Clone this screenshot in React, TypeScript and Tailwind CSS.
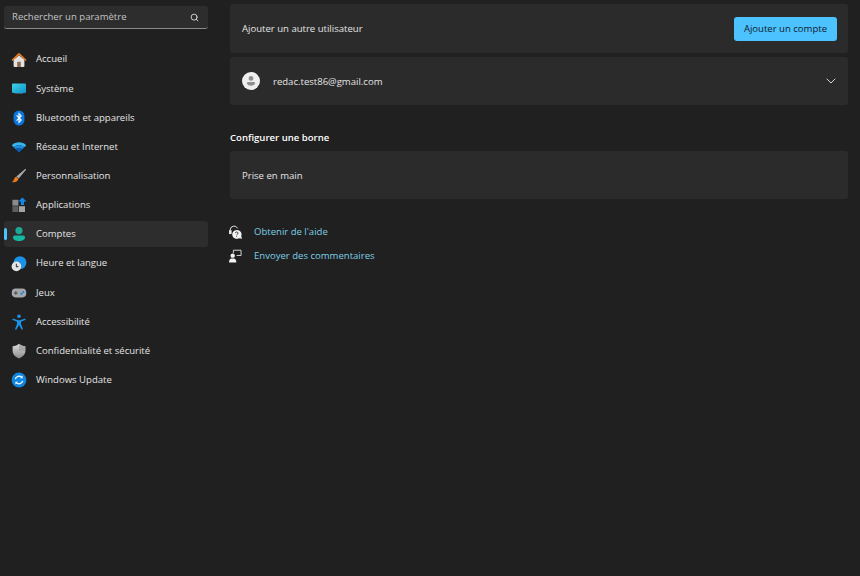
import { ChevronDown, Search } from 'lucide-react'
import type { ReactNode } from 'react'

const Home = () => (
  <svg viewBox="0 0 16 16" className="w-4 h-4">
    <path d="M2.600 7.500 8 3.400l5.400 4.100V14a1 1 0 0 1-1 1H3.600a1 1 0 0 1-1-1z" fill="#e2e2e2" />
    <path d="M6.200 15v-4.600a.6.6 0 0 1 .6-.6h2.400a.6.6 0 0 1 .6.6V15z" fill="#8a6a52" />
    <path d="M.4 8 7.300 1.300a1 1 0 0 1 1.400 0L15.600 8l-1 1.100L8 3.200 1.400 9.100z" fill="#e07b25" />
  </svg>
)

const Monitor = () => (
  <svg viewBox="0 0 16 16" className="w-4 h-4">
    <defs>
      <linearGradient id="sys" x1="0" y1="0" x2="1" y2="1">
        <stop offset="0" stopColor="#3fd0e6" />
        <stop offset="1" stopColor="#1193c9" />
      </linearGradient>
    </defs>
    <rect x="1" y="2.600" width="14" height="9.400" rx="1" fill="url(#sys)" />
    <rect x="4" y="12" width="8" height="1" fill="#3a5a68" />
  </svg>
)

const Bluetooth = () => (
  <svg viewBox="0 0 16 16" className="w-4 h-4">
    <rect x="2.600" y="0.400" width="10.800" height="15.200" rx="5.400" fill="#0a78e0" />
    <path d="M5.600 5.400 10.200 10 8 12.400V3.600L10.200 6 5.600 10.600" fill="none" stroke="#fff" strokeWidth="1.100" />
  </svg>
)

const Wifi = () => (
  <svg viewBox="0 0 16 16" className="w-4 h-4">
    <path d="M.8 6.200C4.800 2.400 11.200 2.400 15.200 6.200l-2 2C10.400 5.600 5.600 5.600 2.800 8.200z" fill="#38b6f0" />
    <path d="M2.800 8.200C5.600 5.600 10.400 5.600 13.200 8.200l-2 2C9.400 8.600 6.600 8.600 4.800 10.200z" fill="#1a8fe0" />
    <path d="M4.800 10.200C6.600 8.600 9.400 8.600 11.200 10.200L8 13.400z" fill="#0c5fb8" />
  </svg>
)

const Brush = () => (
  <svg viewBox="0 0 16 16" className="w-4 h-4">
    <path d="M14.400.8 15.200 1.400 7.800 10.600 5.400 8.400z" fill="#a9a9a9" />
    <path d="M5.200 8.800c-1.800.4-2 2.200-2.600 3.400-.3.700-1 1.400-1.800 1.800 2.800.9 5.800-.2 6.800-3.200z" fill="#e8791f" />
  </svg>
)

const Apps = () => (
  <svg viewBox="0 0 16 16" className="w-4 h-4">
    <rect x="1.400" y="2.800" width="6" height="5.800" fill="#8b8b8b" />
    <rect x="1.400" y="9.200" width="6" height="5.800" fill="#5e5e5e" />
    <rect x="8" y="9.200" width="6" height="5.800" fill="#a3a3a3" />
    <path d="M11.400.6 15.600 4.600H13V8H9.800V4.600H7.200z" fill="#1287e6" />
  </svg>
)

const Account = () => (
  <svg viewBox="0 0 16 16" className="w-4 h-4">
    <circle cx="8" cy="4.600" r="3.600" fill="#1fa795" />
    <path d="M2 11.200A1.800 1.800 0 0 1 3.800 9.400h8.400A1.800 1.800 0 0 1 14 11.200c0 2.600-2.600 3.800-6 3.800s-6-1.200-6-3.800z" fill="#17b8a0" />
  </svg>
)

const Clock = () => (
  <svg viewBox="0 0 16 16" className="w-4 h-4">
    <circle cx="9" cy="6.600" r="6.400" fill="#1a92e6" />
    <circle cx="5.400" cy="10.400" r="4.800" fill="#e4e4e4" />
    <path d="M5.400 7.800v2.800h2" fill="none" stroke="#444" strokeWidth="1.100" />
  </svg>
)

const Gamepad = () => (
  <svg viewBox="0 0 16 16" className="w-4 h-4">
    <rect x="0.800" y="3.400" width="14.400" height="9" rx="3.800" fill="#a4a8ac" />
    <rect x="3" y="7.400" width="3.600" height="1.200" fill="#555" />
    <rect x="4.200" y="6.200" width="1.200" height="3.600" fill="#555" />
    <circle cx="10.400" cy="8.800" r="1.100" fill="#1a84d8" />
    <circle cx="12.200" cy="7" r="1.100" fill="#1a84d8" />
  </svg>
)

const Access = () => (
  <svg viewBox="0 0 16 16" className="w-4 h-4">
    <circle cx="8" cy="2.200" r="1.800" fill="#1a94ea" />
    <path d="M1.800 4.400 7 6.200h2l5.200-1.800.5 1.300L10 7.800V10l2 5.200-1.300.6L8 11l-2.700 4.800-1.300-.6L6 10V7.800L1.300 5.700z" fill="#1a94ea" />
  </svg>
)

const Shield = () => (
  <svg viewBox="0 0 16 16" className="w-4 h-4">
    <defs>
      <linearGradient id="shd" x1="0" y1="0" x2="0" y2="1">
        <stop offset="0" stopColor="#dcdcdc" />
        <stop offset="1" stopColor="#8c8c8c" />
      </linearGradient>
    </defs>
    <path d="M8 .8c1.800 1.500 3.800 2.200 6.400 2.400v4.600c0 3.600-2.400 6-6.400 7.600-4-1.600-6.400-4-6.400-7.600V3.200C4.200 3 6.200 2.300 8 .8z" fill="url(#shd)" />
    <path d="M8 .8c1.800 1.500 3.800 2.200 6.400 2.400v4.600H8z" fill="#8f8f8f" opacity="0.55" />
  </svg>
)

const Update = () => (
  <svg viewBox="0 0 16 16" className="w-4 h-4">
    <circle cx="8" cy="8" r="7.400" fill="#0f86e0" />
    <path d="M4.300 7.200A3.800 3.800 0 0 1 10.800 5.400M11.700 8.800A3.800 3.800 0 0 1 5.200 10.600" fill="none" stroke="#fff" strokeWidth="1.200" />
    <path d="M11.600 3.600v2.600H9zM4.400 12.400V9.800H7z" fill="#fff" />
  </svg>
)

const navItems: { label: string; icon: ReactNode; active?: boolean }[] = [
  { label: 'Accueil', icon: <Home /> },
  { label: 'Système', icon: <Monitor /> },
  { label: 'Bluetooth et appareils', icon: <Bluetooth /> },
  { label: 'Réseau et Internet', icon: <Wifi /> },
  { label: 'Personnalisation', icon: <Brush /> },
  { label: 'Applications', icon: <Apps /> },
  { label: 'Comptes', icon: <Account />, active: true },
  { label: 'Heure et langue', icon: <Clock /> },
  { label: 'Jeux', icon: <Gamepad /> },
  { label: 'Accessibilité', icon: <Access /> },
  { label: 'Confidentialité et sécurité', icon: <Shield /> },
  { label: 'Windows Update', icon: <Update /> },
]

function Card({ children }: { children: ReactNode }) {
  return (
    <div className="h-[48.500px] flex items-center justify-between pl-3 pr-[11px] bg-[#2b2b2b] rounded-[3px]">
      {children}
    </div>
  )
}

export default function App() {
  return (
    <div className="w-[860px] h-[576px] flex bg-[#202020] text-[#e4e4e4] text-[9.550px] font-['Open_Sans','Noto_Sans',sans-serif] overflow-hidden">
      {/* Sidebar */}
      <aside className="w-[230px] shrink-0 pl-1 pr-[22px] pt-1.5">
        <div className="h-[23px] flex items-center justify-between pl-2 pr-[9px] bg-[#2d2d2d] rounded-[3px] border-b border-[#8a8a8a] text-[#c4c4c4]">
          <span>Rechercher un paramètre</span>
          <Search size={9} strokeWidth={2.4} className="text-[#dddddd]" />
        </div>
        <nav className="mt-[17.500px] flex flex-col gap-[3.160px]">
          {navItems.map((item) => (
            <div
              key={item.label}
              className={`relative h-[26px] flex items-center gap-[9px] pl-[7px] rounded-[3px] ${item.active ? 'bg-[#2d2d2d]' : ''}`}
            >
              {item.active && (
                <span className="absolute left-0 top-[7px] w-[2.500px] h-3 rounded-full bg-[#4cc2ff]" />
              )}
              {item.icon}
              <span>{item.label}</span>
            </div>
          ))}
        </nav>
      </aside>

      {/* Main */}
      <main className="w-[618px] pt-1">
        <div className="flex flex-col gap-1">
          <Card>
            <span className="pt-px">Ajouter un autre utilisateur</span>
            <button className="mt-px h-6 w-[103px] rounded-[3px] bg-[#4cc2ff] text-[#10202c] text-[9.550px]">
              Ajouter un compte
            </button>
          </Card>
          <Card>
            <div className="flex items-center gap-[13px]">
              <span className="w-[18px] h-[18px] rounded-full bg-[#efefef] flex items-center justify-center">
                <svg viewBox="0 0 16 16" className="w-3 h-3">
                  <circle cx="8" cy="4.500" r="3.200" fill="#8f8f8f" />
                  <path d="M2.600 10.800a1.400 1.400 0 0 1 1.400-1.400h8a1.400 1.400 0 0 1 1.400 1.400c0 2.400-2.400 3.600-5.400 3.600s-5.400-1.200-5.400-3.600z" fill="#8f8f8f" />
                </svg>
              </span>
              <span className="pt-[2px]">redac.test86@gmail.com</span>
            </div>
            <ChevronDown size={16} strokeWidth={1.4} className="mr-[-2px] text-[#e4e4e4]" />
          </Card>
        </div>

        <h2 className="mt-[24.500px] mb-[5px] h-[16px] leading-[16px] font-semibold text-white">Configurer une borne</h2>
        <Card>
          <span className="pt-[2px]">Prise en main</span>
        </Card>

        <div className="mt-[25px] flex flex-col gap-[8px] text-[#7ccfe6]">
          <div className="h-4 flex items-center gap-[11px] ml-[-1px]">
            <svg viewBox="0 0 16 16" className="w-[14px] h-[14px]" fill="none" stroke="#e8e8e8" strokeWidth="1.100">
              <path d="M1.400 7.400V5.600a4.400 4.400 0 0 1 8.400-1.800" />
              <rect x="0.400" y="6.600" width="2" height="3.200" fill="#e8e8e8" />
              <path d="M8.800 5.800a5 5 0 1 0 2.600 9.200l3.400.8-.8-3.200a5 5 0 0 0-5.200-6.800z" fill="#f2f2f2" stroke="none" />
              <path d="M7.400 9.200a1.400 1.400 0 1 1 2 1.400c-.4.300-.6.500-.6 1M8.800 12.400v1" stroke="#222" strokeWidth="1" />
            </svg>
            <span>Obtenir de l&apos;aide</span>
          </div>
          <div className="h-4 flex items-center gap-[11px] ml-[-1px]">
            <svg viewBox="0 0 16 16" className="w-[14px] h-[14px]">
              <circle cx="4.200" cy="7.600" r="2.500" fill="#f2f2f2" />
              <path d="M0 15.400c0-3 1.400-4.600 3-4.600h2.400c1.600 0 3 1.600 3 4.600z" fill="#f2f2f2" />
              <path d="M5 4.600V1.400h8.800v6h-5" fill="none" stroke="#d8d8d8" strokeWidth="1.100" />
            </svg>
            <span>Envoyer des commentaires</span>
          </div>
        </div>
      </main>
    </div>
  )
}
